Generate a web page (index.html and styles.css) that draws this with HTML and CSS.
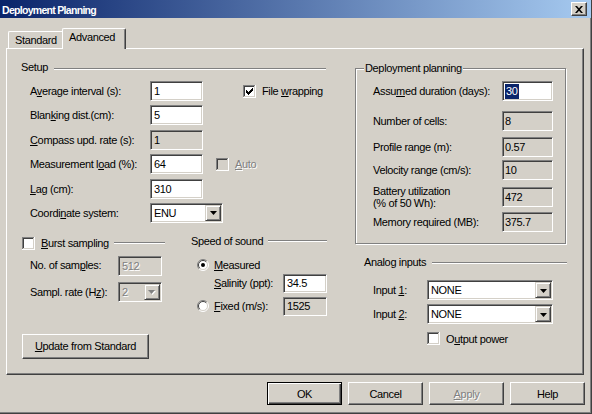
FILE: index.html
```html
<!DOCTYPE html>
<html>
<head>
<meta charset="utf-8">
<link rel="stylesheet" href="styles.css">
</head>
<body>
<div class="window">
  <div class="titlebar">
    <span class="title">Deployment Planning</span>
    <span class="close"><svg width="8" height="7" viewBox="0 0 8 7"><path d="M0 0h2l2 2.3L6 0h2L5 3.5 8 7H6L4 4.7 2 7H0l3-3.5z" fill="#000"/></svg></span>
  </div>
  <div class="tabs">
    <div class="tab">Standard</div>
    <div class="tab active">Advanced</div>
  </div>
  <div class="panel">
    <div class="col-left">
      <div class="sec-head setup-head"><span>Setup</span><i class="rule"></i></div>
      <div class="setup-grid">
        <div class="lbl"><span>A<u>v</u>erage interval (s):</span></div>
        <div class="edit">1</div>
        <div class="extra wrap">
          <span class="chkl"><svg class="chk" width="13" height="13" viewBox="0 0 13 13" shape-rendering="crispEdges"><rect width="13" height="13" fill="#fff"/><rect width="12" height="1" fill="#808080"/><rect width="1" height="12" fill="#808080"/><rect x="1" y="1" width="11" height="11" fill="#d4d0c8"/><rect x="1" y="1" width="10" height="1" fill="#404040"/><rect x="1" y="1" width="1" height="10" fill="#404040"/><rect x="2" y="2" width="9" height="9" fill="#fff"/><g fill="#000"><rect x="3" y="5" width="1" height="3"/><rect x="4" y="6" width="1" height="3"/><rect x="5" y="7" width="1" height="3"/><rect x="6" y="6" width="1" height="3"/><rect x="7" y="5" width="1" height="3"/><rect x="8" y="4" width="1" height="3"/><rect x="9" y="3" width="1" height="3"/></g></svg><span>File <u>w</u>rapping</span></span>
        </div>
        <div class="lbl"><span>Blan<u>k</u>ing dist.(cm):</span></div>
        <div class="edit">5</div>
        <div class="extra"></div>
        <div class="lbl"><span><u>C</u>ompass upd. rate (s):</span></div>
        <div class="edit ro">1</div>
        <div class="extra"></div>
        <div class="lbl"><span>Measurement l<u>o</u>ad (%):</span></div>
        <div class="edit">64</div>
        <div class="extra auto">
          <span class="chkl"><svg class="chk" width="13" height="13" viewBox="0 0 13 13" shape-rendering="crispEdges"><rect width="13" height="13" fill="#fff"/><rect width="12" height="1" fill="#808080"/><rect width="1" height="12" fill="#808080"/><rect x="1" y="1" width="11" height="11" fill="#d4d0c8"/><rect x="1" y="1" width="10" height="1" fill="#404040"/><rect x="1" y="1" width="1" height="10" fill="#404040"/><rect x="2" y="2" width="9" height="9" fill="#d4d0c8"/></svg><span class="dis"><u>A</u>uto</span></span>
        </div>
        <div class="lbl"><span><u>L</u>ag (cm):</span></div>
        <div class="edit">310</div>
        <div class="extra"></div>
        <div class="lbl"><span>Coordi<u>n</u>ate system:</span></div>
        <div class="combo coord"><span>ENU</span><span class="dd"><svg width="7" height="4" viewBox="0 0 7 4"><path d="M0 0h7L3.5 4z" fill="#000"/></svg></span></div>
      </div>
      <div class="lower">
        <div class="burst">
          <div class="sec-head burst-head">
            <svg class="chk" width="13" height="13" viewBox="0 0 13 13" shape-rendering="crispEdges"><rect width="13" height="13" fill="#fff"/><rect width="12" height="1" fill="#808080"/><rect width="1" height="12" fill="#808080"/><rect x="1" y="1" width="11" height="11" fill="#d4d0c8"/><rect x="1" y="1" width="10" height="1" fill="#404040"/><rect x="1" y="1" width="1" height="10" fill="#404040"/><rect x="2" y="2" width="9" height="9" fill="#fff"/></svg>
            <span class="burst-txt"><u>B</u>urst sampling</span><i class="rule"></i>
          </div>
          <div class="burst-grid">
            <div class="lbl"><span>No. of sam<u>p</u>les:</span></div>
            <div class="edit ro dis-val">512</div>
            <div class="lbl"><span>Sampl. rate (H<u>z</u>):</span></div>
            <div class="combo ro"><span class="dis-val">2</span><span class="dd"><svg width="8" height="5" viewBox="0 0 8 5"><path d="M1 1h7L4.5 5z" fill="#fff"/><path d="M0 0h7L3.5 4z" fill="#808080"/></svg></span></div>
          </div>
        </div>
        <div class="sos">
          <div class="sec-head sos-head"><span>Speed of sound</span><i class="rule"></i></div>
          <div class="radio-row first">
            <svg class="rad" width="12" height="12" viewBox="0 0 12 12"><circle cx="6" cy="6" r="5" fill="#fff"/><path d="M2.1 9.9A5.5 5.5 0 0 1 9.9 2.1" stroke="#808080" fill="none"/><path d="M9.9 2.1A5.5 5.5 0 0 1 2.1 9.9" stroke="#fff" fill="none"/><path d="M2.8 9.2A4.5 4.5 0 0 1 9.2 2.8" stroke="#404040" fill="none"/><path d="M9.2 2.8A4.5 4.5 0 0 1 2.8 9.2" stroke="#d4d0c8" fill="none"/><circle cx="6" cy="6" r="2" fill="#000"/></svg>
            <span><u>M</u>easured</span>
          </div>
          <div class="sos-row sal">
            <div class="lbl"><span><u>S</u>alinity (ppt):</span></div>
            <div class="edit">34.5</div>
          </div>
          <div class="sos-row fixed">
            <div class="lbl radio-lbl">
              <svg class="rad" width="12" height="12" viewBox="0 0 12 12"><circle cx="6" cy="6" r="5" fill="#fff"/><path d="M2.1 9.9A5.5 5.5 0 0 1 9.9 2.1" stroke="#808080" fill="none"/><path d="M9.9 2.1A5.5 5.5 0 0 1 2.1 9.9" stroke="#fff" fill="none"/><path d="M2.8 9.2A4.5 4.5 0 0 1 9.2 2.8" stroke="#404040" fill="none"/><path d="M9.2 2.8A4.5 4.5 0 0 1 2.8 9.2" stroke="#d4d0c8" fill="none"/></svg>
              <span><u>F</u>ixed (m/s):</span>
            </div>
            <div class="edit ro">1525</div>
          </div>
        </div>
      </div>
      <div class="btn update"><span><u>U</u>pdate from Standard</span></div>
    </div>
    <div class="col-right">
      <div class="gbox">
        <div class="legend">Deployment planning</div>
        <div class="dp-row r1"><span>Assu<u>m</u>ed duration (days):</span><div class="edit dp"><span class="sel">30</span></div></div>
        <div class="dp-row r2"><span>Number of cells:</span><div class="edit dp ro">8</div></div>
        <div class="dp-row r3"><span>Profile range (m):</span><div class="edit dp ro">0.57</div></div>
        <div class="dp-row r4"><span>Velocity range (cm/s):</span><div class="edit dp ro">10</div></div>
        <div class="dp-row r5"><span class="two">Battery utilization<br>(% of 50 Wh):</span><div class="edit dp ro">472</div></div>
        <div class="dp-row r6"><span>Memory required (MB):</span><div class="edit dp ro">375.7</div></div>
      </div>
      <div class="sec-head analog-head"><span>Analog inputs</span><i class="rule"></i></div>
      <div class="ai-row a1">
        <div class="lbl"><span>Input <u>1</u>:</span></div>
        <div class="combo ai"><span>NONE</span><span class="dd"><svg width="7" height="4" viewBox="0 0 7 4"><path d="M0 0h7L3.5 4z" fill="#000"/></svg></span></div>
      </div>
      <div class="ai-row a2">
        <div class="lbl"><span>Input <u>2</u>:</span></div>
        <div class="combo ai"><span>NONE</span><span class="dd"><svg width="7" height="4" viewBox="0 0 7 4"><path d="M0 0h7L3.5 4z" fill="#000"/></svg></span></div>
      </div>
      <div class="outpow">
        <span class="chkl"><svg class="chk" width="13" height="13" viewBox="0 0 13 13" shape-rendering="crispEdges"><rect width="13" height="13" fill="#fff"/><rect width="12" height="1" fill="#808080"/><rect width="1" height="12" fill="#808080"/><rect x="1" y="1" width="11" height="11" fill="#d4d0c8"/><rect x="1" y="1" width="10" height="1" fill="#404040"/><rect x="1" y="1" width="1" height="10" fill="#404040"/><rect x="2" y="2" width="9" height="9" fill="#fff"/></svg><span>O<u>u</u>tput power</span></span>
      </div>
    </div>
  </div>
  <div class="buttons">
    <div class="btn def">OK</div>
    <div class="btn">Cancel</div>
    <div class="btn"><span class="dis"><u>A</u>pply</span></div>
    <div class="btn">Help</div>
  </div>
</div>
</body>
</html>
```
FILE: styles.css
```css
html, body {
  margin: 0;
  padding: 0;
  background: #d4d0c8;
}
body {
  font-family: "Liberation Sans", Arial, sans-serif;
  font-size: 11px;
  letter-spacing: -0.35px;
  color: #000;
}
.window {
  width: 592px;
  height: 414px;
  box-sizing: border-box;
  background: #d4d0c8;
  border-right: 1px solid #404040;
  border-bottom: 1px solid #404040;
  box-shadow: inset -1px -1px 0 #808080;
  overflow: hidden;
}
u { text-decoration: underline; text-underline-offset: 1px; }

/* title bar */
.titlebar {
  height: 18px;
  background: linear-gradient(to right, #0a246a, #a6caf0);
  display: flex;
  align-items: center;
  justify-content: space-between;
  padding: 0 4px 0 2px;
}
.title {
  color: #fff;
  font-weight: bold;
  font-size: 10.5px;
  letter-spacing: -0.7px;
  padding-top: 1px;
}
.close {
  width: 16px;
  height: 14px;
  box-sizing: border-box;
  background: #d4d0c8;
  border: 1px solid;
  border-color: #fff #404040 #404040 #fff;
  box-shadow: inset -1px -1px 0 #808080;
  display: flex;
  align-items: center;
  justify-content: center;
  padding-right: 1px;
}
.close svg { display: block; }

/* tabs */
.tabs {
  display: flex;
  align-items: flex-end;
  height: 20px;
  margin-top: 10px;
  padding-left: 8px;
}
.tab {
  height: 17px;
  box-sizing: border-box;
  width: 54px;
  padding-left: 6px;
  border-top: 1px solid #fff;
  border-left: 1px solid #fff;
  border-top-left-radius: 2px;
  display: flex;
  align-items: center;
  padding-bottom: 1px;
}
.tab.active {
  position: relative;
  z-index: 1;
  height: 21px;
  width: 64px;
  margin-bottom: -1px;
  background: #d4d0c8;
  border-right: 1px solid #404040;
  border-top-right-radius: 2px;
  box-shadow: inset -1px 0 0 #808080;
  padding-bottom: 4px;
}

/* panel */
.panel {
  margin-left: 6px;
  width: 578px;
  height: 327px;
  box-sizing: border-box;
  border-top: 1px solid #fff;
  border-left: 1px solid #fff;
  border-right: 1px solid #404040;
  border-bottom: 1px solid #404040;
  box-shadow: inset -1px -1px 0 #808080;
  display: flex;
  align-items: flex-start;
}
.col-left {
  margin-left: 14px;
  width: 306px;
  padding-top: 12px;
}
.col-right {
  margin-left: 28px;
  width: 212px;
  padding-top: 19px;
}

/* section headers with etched rule */
.sec-head {
  display: flex;
  align-items: center;
  height: 13px;
  line-height: 13px;
  white-space: nowrap;
}
.rule {
  flex: 1;
  height: 0;
  border-top: 1px solid #808080;
  border-bottom: 1px solid #fff;
  margin-top: 2px;
}
.setup-head { width: 305px; }
.setup-head .rule { margin-left: 6px; }

/* edits */
.edit {
  height: 20px;
  box-sizing: border-box;
  background: #fff;
  border: 1px solid;
  border-color: #808080 #fff #fff #808080;
  box-shadow: inset 1px 1px 0 #404040, inset -1px -1px 0 #d4d0c8;
  padding: 0 0 0 3px;
  line-height: 18px;
  white-space: nowrap;
  overflow: hidden;
}
.edit.ro { background: #d4d0c8; }
.dis-val { color: #808080; text-shadow: 1px 1px 0 #fff; }
.dis { color: #808080; text-shadow: 1px 1px 0 #fff; }

.combo {
  height: 20px;
  box-sizing: border-box;
  background: #fff;
  border: 1px solid;
  border-color: #808080 #fff #fff #808080;
  box-shadow: inset 1px 1px 0 #404040, inset -1px -1px 0 #d4d0c8;
  padding: 1px 1px 1px 3px;
  display: flex;
  align-items: center;
  justify-content: space-between;
  line-height: 16px;
}
.combo.ro { background: #d4d0c8; }
.dd {
  width: 16px;
  height: 16px;
  box-sizing: border-box;
  background: #d4d0c8;
  border: 1px solid;
  border-color: #d4d0c8 #404040 #404040 #d4d0c8;
  box-shadow: inset 1px 1px 0 #fff, inset -1px -1px 0 #808080;
  display: flex;
  align-items: center;
  justify-content: center;
  padding-top: 1px;
}
.dd svg { display: block; }

/* setup grid */
.setup-grid {
  margin-top: 7px;
  display: grid;
  grid-template-columns: 129px 53px auto;
  grid-auto-rows: 20px;
  row-gap: 4.4px;
}
.lbl {
  display: flex;
  align-items: center;
  white-space: nowrap;
}
.setup-grid .lbl { padding-left: 9px; }
.extra { display: flex; align-items: center; white-space: nowrap; }
.extra.wrap { padding-left: 40px; }
.extra.auto { padding-left: 13px; }
.chkl { display: flex; align-items: center; gap: 6px; white-space: nowrap; }
.chk, .rad { display: block; flex: none; }
.coord { grid-column: 2 / span 2; width: 73px; }

/* lower area */
.lower {
  margin-top: 14px;
  height: 97px;
  display: flex;
  align-items: flex-start;
}
.burst {
  margin-left: 1px;
  width: 143px;
}
.burst-txt { margin-left: 6px; }
.burst-head .rule { margin-left: 5px; margin-top: 0; margin-bottom: 1px; }
.burst-grid {
  margin-top: 6px;
  display: grid;
  grid-template-columns: 96px 44px;
  grid-template-rows: 19px 20px;
  row-gap: 7px;
}
.burst-grid .lbl { padding-left: 8px; }

.sos {
  margin-left: 26px;
  width: 136px;
  margin-top: -2px;
}
.sos-head .rule { margin-left: 5px; margin-top: 0; }
.radio-row {
  display: flex;
  align-items: center;
  gap: 5px;
  height: 14px;
  margin-top: 10px;
  padding-left: 6px;
}
.sos-row {
  display: grid;
  grid-template-columns: 92px 44px;
  height: 19px;
}
.sos-row .edit { height: 19px; line-height: 17px; }
.sos-row.sal { margin-top: 2px; }
.sos-row.sal .lbl { padding-left: 23px; }
.sos-row.fixed { margin-top: 4px; }
.radio-lbl { padding-left: 6px; gap: 5px; }

/* buttons */
.btn {
  box-sizing: border-box;
  width: 75px;
  height: 23px;
  background: #d4d0c8;
  border: 1px solid;
  border-color: #fff #404040 #404040 #fff;
  box-shadow: inset -1px -1px 0 #808080;
  display: flex;
  align-items: center;
  justify-content: center;
  white-space: nowrap;
}
.btn.def {
  border-color: #000;
  box-shadow: inset 1px 1px 0 #fff, inset -1px -1px 0 #404040, inset -2px -2px 0 #808080;
}
.btn.update {
  width: 127px;
  height: 25px;
  margin-left: 1px;
}
.buttons {
  display: flex;
  justify-content: flex-end;
  gap: 6px;
  margin-top: 7px;
  padding-right: 6px;
}

/* deployment group box */
.gbox {
  width: 211px;
  height: 176px;
  box-sizing: border-box;
  border: 1px solid #808080;
  box-shadow: inset 1px 1px 0 #fff, 1px 1px 0 #fff;
}
.legend {
  display: table;
  margin: -7px 0 0 8px;
  padding: 0 1px;
  height: 13px;
  line-height: 13px;
  background: #d4d0c8;
}
.dp-row {
  display: flex;
  align-items: center;
  justify-content: space-between;
  height: 20px;
  padding: 0 12px 0 17px;
  white-space: nowrap;
}
.dp-row.r1 { margin-top: 6px; }
.dp-row.r2 { margin-top: 10px; }
.dp-row.r3 { margin-top: 6px; }
.dp-row.r4 { margin-top: 3px; }
.dp-row.r5 { margin-top: 7px; }
.dp-row.r6 { margin-top: 5px; }
.two { line-height: 12px; }
.edit.dp { width: 51px; padding-left: 2px; }
.sel {
  background: #0a246a;
  color: #fff;
  padding: 0 1px;
  display: inline-block;
  line-height: 15px;
}

/* analog */
.analog-head {
  margin-top: 12px;
  margin-left: 9px;
  width: 203px;
}
.analog-head .rule { margin-left: 6px; margin-top: 0; }
.ai-row {
  display: grid;
  grid-template-columns: 72px 126px;
  height: 20px;
}
.ai-row .lbl { padding-left: 18px; }
.ai-row.a1 { margin-top: 11px; }
.ai-row.a2 { margin-top: 4px; }
.outpow {
  margin-top: 8px;
  padding-left: 72px;
  height: 13px;
  display: flex;
  align-items: center;
}
```
